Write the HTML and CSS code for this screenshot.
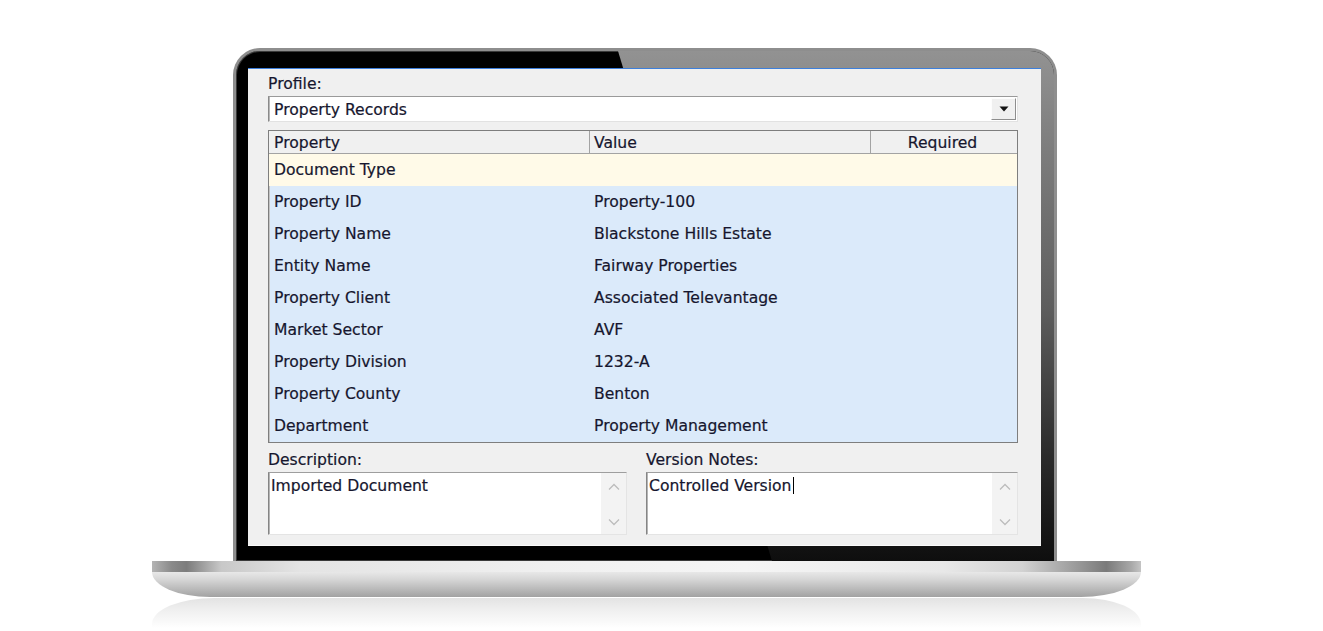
FILE: index.html
```html
<!DOCTYPE html>
<html lang="en">
<head>
<meta charset="utf-8">
<title>Property Records</title>
<link rel="stylesheet" href="styles.css">
</head>
<body>
<div class="laptop">
  <div class="bezel">
    <div class="screen">
      <div class="dialog">
        <div class="label">Profile:</div>
        <div class="combo">
          <span class="combo-text">Property Records</span>
          <span class="combo-btn">
            <svg width="10" height="6" viewBox="0 0 10 6"><path d="M0.5 0.5 H9.5 L5 5.5 Z" fill="#111"/></svg>
          </span>
        </div>
        <div class="grid">
          <div class="grid-head">
            <div class="cell c1">Property</div>
            <div class="cell c2">Value</div>
            <div class="cell c3">Required</div>
          </div>
          <div class="row row-type">
            <div class="cell c1">Document Type</div>
            <div class="cell c2"></div>
            <div class="cell c3"></div>
          </div>
          <div class="row"><div class="cell c1">Property ID</div><div class="cell c2">Property-100</div><div class="cell c3"></div></div>
          <div class="row"><div class="cell c1">Property Name</div><div class="cell c2">Blackstone Hills Estate</div><div class="cell c3"></div></div>
          <div class="row"><div class="cell c1">Entity Name</div><div class="cell c2">Fairway Properties</div><div class="cell c3"></div></div>
          <div class="row"><div class="cell c1">Property Client</div><div class="cell c2">Associated Televantage</div><div class="cell c3"></div></div>
          <div class="row"><div class="cell c1">Market Sector</div><div class="cell c2">AVF</div><div class="cell c3"></div></div>
          <div class="row"><div class="cell c1">Property Division</div><div class="cell c2">1232-A</div><div class="cell c3"></div></div>
          <div class="row"><div class="cell c1">Property County</div><div class="cell c2">Benton</div><div class="cell c3"></div></div>
          <div class="row"><div class="cell c1">Department</div><div class="cell c2">Property Management</div><div class="cell c3"></div></div>
        </div>
        <div class="notes">
          <div class="note note-desc">
            <div class="label">Description:</div>
            <div class="textbox">
              <div class="tb-text">Imported Document</div>
              <div class="tb-scroll">
                <svg width="12" height="8" viewBox="0 0 12 8"><path d="M1 6.5 L6 1.5 L11 6.5" fill="none" stroke="#bcbcbc" stroke-width="1.3"/></svg>
                <svg width="12" height="8" viewBox="0 0 12 8"><path d="M1 1.5 L6 6.5 L11 1.5" fill="none" stroke="#bcbcbc" stroke-width="1.3"/></svg>
              </div>
            </div>
          </div>
          <div class="note note-ver">
            <div class="label">Version Notes:</div>
            <div class="textbox">
              <div class="tb-text">Controlled Version<span class="caret"></span></div>
              <div class="tb-scroll">
                <svg width="12" height="8" viewBox="0 0 12 8"><path d="M1 6.5 L6 1.5 L11 6.5" fill="none" stroke="#bcbcbc" stroke-width="1.3"/></svg>
                <svg width="12" height="8" viewBox="0 0 12 8"><path d="M1 1.5 L6 6.5 L11 1.5" fill="none" stroke="#bcbcbc" stroke-width="1.3"/></svg>
              </div>
            </div>
          </div>
        </div>
      </div>
    </div>
  </div>
  <div class="base">
    <div class="base-lip"></div>
    <div class="base-body"></div>
    <div class="base-reflect"></div>
  </div>
</div>
</body>
</html>
```

FILE: styles.css
```css
* { box-sizing: border-box; }

html, body {
  margin: 0;
  padding: 0;
  background: #ffffff;
}

body {
  width: 1323px;
  height: 631px;
  overflow: hidden;
  font-family: "DejaVu Sans", Verdana, sans-serif;
  font-size: 15.6px;
  color: #16162e;
  -webkit-text-stroke: 0.2px #16162e;
}

.laptop {
  width: 989px;
  margin-left: 152px;
  padding-top: 48px;
}

/* ---------- bezel ---------- */
.bezel {
  position: relative;
  width: 824px;
  height: 513px;
  margin-left: 81px;
  background: #000;
  border: 3px solid #8e8e8e;
  border-bottom: none;
  border-radius: 27px 27px 0 0;
  padding: 17px 13px 15px 12px;
  box-shadow: inset 0 0 0 1px #3a3a3a;
}

.bezel::before {
  content: "";
  position: absolute;
  top: 0;
  left: 0;
  right: 0;
  bottom: 0;
  border-radius: 24px 24px 0 0;
  background: linear-gradient(to bottom, #929292 0%, #7c7c7c 20%, #5e5e5e 50%, #2a2a2a 80%, #0e0e0e 100%);
  clip-path: polygon(382px 0, 100% 0, 100% 100%, 536px 100%);
}

.screen {
  position: relative;
  width: 793px;
  height: 478px;
}

/* ---------- dialog ---------- */
.dialog {
  height: 100%;
  background: #f0f0f0;
  border-top: 1px solid #3d7fdb;
  box-shadow: inset 0 -1px 0 #fbfbfb;
  padding: 4px 23px 11px 20px;
  display: flex;
  flex-direction: column;
}

.label {
  height: 20px;
  line-height: 22px;
  white-space: nowrap;
}

.combo {
  margin-top: 3px;
  height: 26px;
  background: #fff;
  border: 1px solid;
  border-color: #9a9a9a #e2e2e2 #e2e2e2 #8a8a8a;
  box-shadow: inset 1px 0 0 #b8b8b8;
  display: flex;
  align-items: center;
  justify-content: space-between;
  padding: 0 1px 0 5px;
}

.combo-text {
  line-height: 20px;
  padding-top: 2px;
}

.combo-btn {
  width: 25px;
  height: 22px;
  background: #f0f0f0;
  border: 1px solid;
  border-color: #fdfdfd #8d8d8d #8d8d8d #fdfdfd;
  display: flex;
  align-items: center;
  justify-content: center;
  -webkit-text-stroke: 0;
}

/* ---------- grid ---------- */
.grid {
  margin-top: 8px;
  height: 313px;
  border: 1px solid #7e7e7e;
  box-shadow: inset 1px 0 0 #c4c4c4;
  display: flex;
  flex-direction: column;
  background: #dbeafa;
}

.grid-head,
.row {
  display: grid;
  grid-template-columns: 320px 281px 1fr;
}

.grid-head {
  height: 23px;
  background: #f0f0f0;
  border-bottom: 1px solid #a3a3a3;
}

.grid-head .cell {
  line-height: 24px;
}

.grid-head .c2,
.grid-head .c3 {
  border-left: 1px solid #a3a3a3;
}

.grid-head .c3 {
  text-align: center;
  padding-left: 0;
  padding-right: 3px;
}

.cell {
  padding-left: 5px;
  white-space: nowrap;
  overflow: hidden;
}

.grid-head .c2 {
  padding-left: 4px;
}

.row {
  height: 32px;
}

.row .cell {
  line-height: 33px;
}

.row-type {
  background: #fffae8;
}

/* ---------- notes ---------- */
.notes {
  margin-top: 6px;
  display: grid;
  grid-template-columns: 359px 372px;
  column-gap: 19px;
}

.textbox {
  margin-top: 3px;
  height: 63px;
  background: #fff;
  border: 1px solid;
  border-color: #9e9e9e #e4e4e4 #e4e4e4 #858585;
  box-shadow: inset 1px 0 0 #b5b5b5;
  display: flex;
}

.tb-text {
  flex: 1;
  padding: 3px 0 0 2px;
  line-height: 20px;
  white-space: nowrap;
}

.caret {
  display: inline-block;
  width: 1px;
  height: 17px;
  margin-left: 1px;
  background: #000;
  vertical-align: -3px;
}

.tb-scroll {
  width: 25px;
  background: #f3f3f3;
  display: flex;
  flex-direction: column;
  align-items: center;
  justify-content: space-between;
  padding: 10px 0 8px;
}

/* ---------- base ---------- */
.base-lip {
  height: 11px;
  background: linear-gradient(to right, #b4b4b4 0%, #8a8a8a 2%, #7c7c7c 3.5%, #c8c8c8 7%, #e4e4e4 15%, #f0f0f0 40%, #f5f5f5 60%, #e8e8e8 80%, #d2d2d2 88%, #959595 94%, #7a7a7a 96.5%, #a8a8a8 99%, #c4c4c4 100%);
}

.base-body {
  height: 25px;
  border-radius: 0 0 60px 58px / 0 0 25px 25px;
  background: linear-gradient(to bottom, #e8e8e8 0%, #d6d6d6 30%, #bcbcbc 65%, #a2a2a2 100%);
}

.base-reflect {
  margin-top: 1px;
  height: 30px;
  border-radius: 62px 58px 0 0 / 26px 26px 0 0;
  background: linear-gradient(to bottom, #e3e3e3 0%, #eeeeee 35%, #f8f8f8 75%, #ffffff 100%);
}
```
